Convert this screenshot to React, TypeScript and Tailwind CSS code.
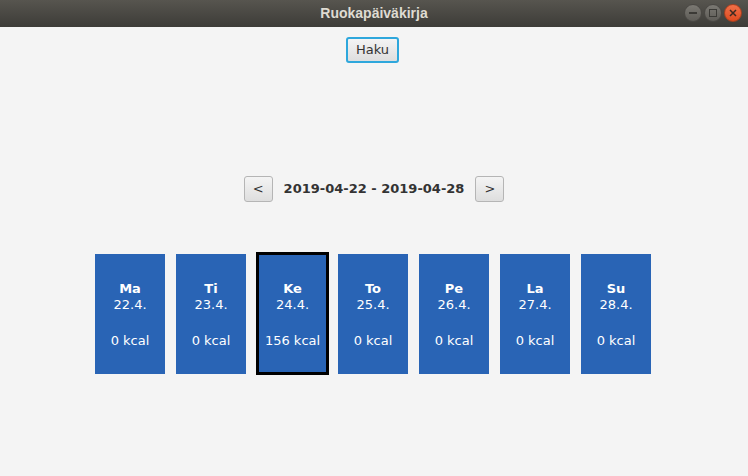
const days = [
  { name: "Ma", date: "22.4.", kcal: 0 },
  { name: "Ti", date: "23.4.", kcal: 0 },
  { name: "Ke", date: "24.4.", kcal: 156, selected: true },
  { name: "To", date: "25.4.", kcal: 0 },
  { name: "Pe", date: "26.4.", kcal: 0 },
  { name: "La", date: "27.4.", kcal: 0 },
  { name: "Su", date: "28.4.", kcal: 0 },
];

const font = { fontFamily: '"DejaVu Sans", sans-serif' };

const TitleBar = () => (
  <div className="relative flex h-[27px] items-center justify-center bg-gradient-to-b from-[#57554f] to-[#3d3c38]">
    <span className="text-[14px] font-bold text-[#dfdbd2]" style={{ fontFamily: '"Liberation Sans", sans-serif' }}>
      Ruokapäiväkirja
    </span>
    <div className="absolute right-[6px] top-[4px] flex gap-[2px]">
      <div className="flex h-[18px] w-[18px] items-center justify-center rounded-full bg-gradient-to-b from-[#7b7973] to-[#5e5c57] border border-[#4a4844]">
        <div className="h-[1.5px] w-[8px] bg-[#3b3a36]" />
      </div>
      <div className="flex h-[18px] w-[18px] items-center justify-center rounded-full bg-gradient-to-b from-[#7b7973] to-[#5e5c57] border border-[#4a4844]">
        <div className="h-[8px] w-[8px] border-[1.5px] border-[#3b3a36]" />
      </div>
      <div className="flex h-[18px] w-[18px] items-center justify-center rounded-full bg-gradient-to-b from-[#f07048] to-[#de4a1e] border border-[#a8401f]">
        <svg width="8" height="8" viewBox="0 0 8 8">
          <path d="M1 1 L7 7 M7 1 L1 7" stroke="#3b2a22" strokeWidth="1.5" />
        </svg>
      </div>
    </div>
  </div>
);

const FxButton = ({ children, focused, className }: { children: React.ReactNode; focused?: boolean; className?: string }) => (
  <div
    className={
      "flex items-center justify-center rounded-[3px] bg-gradient-to-b from-[#f4f4f4] to-[#dedede] text-[13px] text-[#333333] " +
      (focused ? "border-2 border-[#2ea7dc] " : "border border-[#b5b5b5] ") +
      (className ?? "")
    }
  >
    {children}
  </div>
);

export default function App() {
  return (
    <div className="flex h-[476px] w-[748px] flex-col overflow-hidden bg-[#f4f4f4]" style={font}>
      <TitleBar />
      <div className="mt-[10px] flex justify-center pr-[3px]">
        <FxButton focused className="h-[26px] w-[53px]">Haku</FxButton>
      </div>
      <div className="mt-[113px] flex items-center justify-center">
        <FxButton className="h-[26px] w-[29px]">&lt;</FxButton>
        <span className="mx-[11px] text-[13px] font-bold text-[#333333]">2019-04-22 - 2019-04-28</span>
        <FxButton className="h-[26px] w-[29px]">&gt;</FxButton>
      </div>
      <div className="mt-[52px] flex items-start justify-center gap-[11px] pr-[2px]">
        {days.map((d) =>
          d.selected ? (
            <div
              key={d.name}
              className="-mt-[2px] ml-[-1px] mr-[-2px] flex h-[123px] w-[73px] flex-col items-center border-[3px] border-black bg-[#2964b5] pt-[26px] text-[13px] leading-[16px] text-white"
            >
              <span className="font-bold">{d.name}</span>
              <span>{d.date}</span>
              <span className="mt-[20px]">{d.kcal} kcal</span>
            </div>
          ) : (
            <div
              key={d.name}
              className="flex h-[120px] w-[70px] flex-col items-center bg-[#2964b5] pt-[27px] text-[13px] leading-[16px] text-white"
            >
              <span className="font-bold">{d.name}</span>
              <span>{d.date}</span>
              <span className="mt-[20px]">{d.kcal} kcal</span>
            </div>
          )
        )}
      </div>
    </div>
  );
}
